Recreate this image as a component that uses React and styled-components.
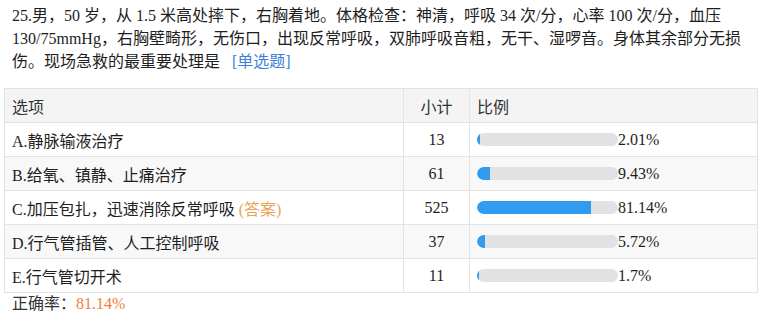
import React from "react";
import styled, { createGlobalStyle } from "styled-components";

const Global = createGlobalStyle`
  html, body { margin: 0; padding: 0; background: #fff; }
  body { font-family: "Liberation Serif", "Noto Sans CJK SC", serif; color: #222; }
`;

const Page = styled.div`
  width: 763px;
  padding: 4px 5px 0 4px;
  box-sizing: border-box;
`;

const Question = styled.div`
  padding: 0 8px;
  font-size: 16px;
  line-height: 23px;
  color: #1e1e1e;
`;

const Tag = styled.span`
  color: #3d7fd8;
  margin-left: 12px;
`;

const Table = styled.table`
  margin-top: 15px;
  width: 754px;
  border-collapse: collapse;
  table-layout: fixed;
  font-size: 16px;
`;

const Row = styled.tr`
  height: 34px;
  background: ${(p) => (p.$shade ? "#f8f8f8" : "#fff")};
`;

const Head = styled.th`
  font-weight: normal;
  background: #f4f4f4;
  color: #333;
  height: 33px;
  border: 1px solid #e3e3e3;
  padding: 0 7px;
  text-align: ${(p) => p.$align || "left"};
`;

const Cell = styled.td`
  border: 1px solid #e3e3e3;
  padding: 0 7px;
  color: #1e1e1e;
  text-align: ${(p) => p.$align || "left"};
  white-space: nowrap;
`;

const Answer = styled.span`
  color: #e9a458;
`;

const Ratio = styled.div`
  display: flex;
  align-items: center;
`;

const Track = styled.div`
  width: 141px;
  height: 13px;
  border-radius: 7px;
  background: #e2e2e4;
  overflow: hidden;
  flex: none;
`;

const Fill = styled.div`
  height: 100%;
  background: #2f9cf2;
  border-radius: 7px 0 0 7px;
`;

const Footer = styled.div`
  padding: 1px 8px 0;
  font-size: 16px;
  line-height: 20px;
  color: #333;
`;

const Rate = styled.span`
  color: #f0803a;
`;

const data = [
  { label: "A.静脉输液治疗", n: 13, p: "2.01%", v: 2.01 },
  { label: "B.给氧、镇静、止痛治疗", n: 61, p: "9.43%", v: 9.43 },
  { label: "C.加压包扎，迅速消除反常呼吸", n: 525, p: "81.14%", v: 81.14, ans: true },
  { label: "D.行气管插管、人工控制呼吸", n: 37, p: "5.72%", v: 5.72 },
  { label: "E.行气管切开术", n: 11, p: "1.7%", v: 1.7 },
];

export default function App() {
  return (
    <Page>
      <Global />
      <Question>
        25.男，50 岁，从 1.5 米高处摔下，右胸着地。体格检查：神清，呼吸 34 次/分，心率 100 次/分，血压
        130/75mmHg，右胸壁畸形，无伤口，出现反常呼吸，双肺呼吸音粗，无干、湿啰音。身体其余部分无损伤。现场急救的最重要处理是
        <Tag>[单选题]</Tag>
      </Question>
      <Table>
        <colgroup>
          <col style={{ width: 399 }} />
          <col style={{ width: 66 }} />
          <col />
        </colgroup>
        <thead>
          <Row>
            <Head>选项</Head>
            <Head $align="center">小计</Head>
            <Head>比例</Head>
          </Row>
        </thead>
        <tbody>
          {data.map((d, i) => (
            <Row key={d.label} $shade={i % 2 === 1}>
              <Cell>
                {d.label}
                {d.ans && <Answer> (答案)</Answer>}
              </Cell>
              <Cell $align="center">{d.n}</Cell>
              <Cell>
                <Ratio>
                  <Track>
                    <Fill style={{ width: `${d.v}%` }} />
                  </Track>
                  {d.p}
                </Ratio>
              </Cell>
            </Row>
          ))}
        </tbody>
      </Table>
      <Footer>
        正确率：<Rate>81.14%</Rate>
      </Footer>
    </Page>
  );
}
